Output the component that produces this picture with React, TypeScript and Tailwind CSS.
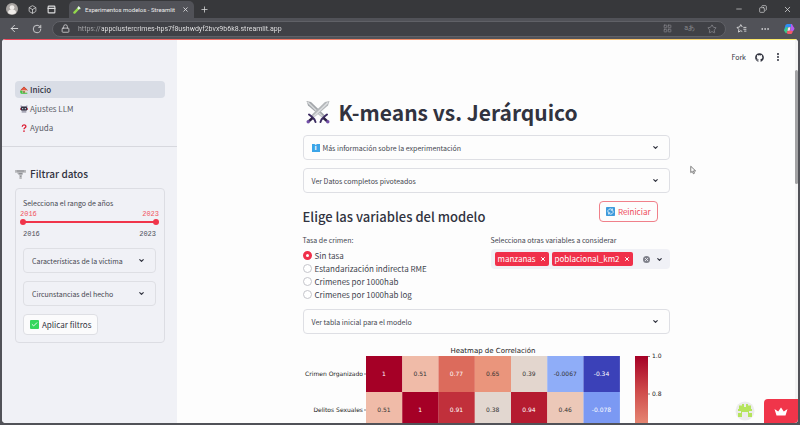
import { ReactNode, useState } from 'react';
import {
  ArrowLeft, RotateCw, Lock, Plus, X, Minus, Copy, Star, Ellipsis, ChevronDown, EllipsisVertical,
  PanelTop, Box, LayoutGrid, Check,
} from 'lucide-react';
import { FaGithub } from 'react-icons/fa';

const sans = "font-['Noto_Sans_CJK_SC','Open_Sans',sans-serif]";
const chrome = "font-['Roboto','Noto_Sans',sans-serif]";

function BrowserChrome() {
  return (
    <div className={`${chrome} shrink-0 text-[#dcdcde]`}>
      <div className="flex h-[18px] items-end bg-[#37383b]">
        <div className="flex h-[18px] w-[69px] items-center gap-[10px] pl-[6px]">
          <svg viewBox="0 0 12 12" className="size-3">
            <circle cx="6" cy="6" r="6" fill="#a9a5a2" />
            <circle cx="6" cy="4.6" r="2.4" fill="#efece9" />
            <path d="M2 9.8a4 3.2 0 0 1 8 0A6 6 0 0 1 2 9.8Z" fill="#efece9" />
          </svg>
          <Box className="size-[9px]" />
          <PanelTop className="size-[9px]" strokeWidth={3} />
        </div>
        <div className="flex h-[17px] w-[125px] items-center gap-1 rounded-t-[5px] bg-[#515258] pr-[5px] pl-1">
          <svg viewBox="0 0 10 10" className="size-2 shrink-0">
            <path d="M1.8 8.2 7.6 2.2" stroke="#93d84c" strokeWidth="3" strokeLinecap="round" />
            <path d="m6.2 3.6 2-2" stroke="#e8f6e8" strokeWidth="3" />
            <path d="m6.2.4 3.2 3" stroke="#d7e4ea" strokeWidth="1" />
          </svg>
          <span className="flex-1 text-[6px] leading-[12px] whitespace-nowrap text-[#ededee]">Experimentos modelos - Streamlit</span>
          <button aria-label="Cerrar pestaña"><X className="size-[7px]" strokeWidth={3} /></button>
        </div>
        <button aria-label="Nueva pestaña" className="flex h-[18px] items-center pl-[6px]"><Plus className="size-[9px]" /></button>
        <div className="ml-auto flex h-[18px] items-center gap-4 pr-2">
          <button aria-label="Minimizar"><Minus className="size-2" /></button>
          <button aria-label="Restaurar"><Copy className="size-2 -scale-x-100" /></button>
          <button aria-label="Cerrar"><X className="size-[9px]" /></button>
        </div>
      </div>
      <div className="flex h-[21px] items-center bg-[#515258] pr-[5px] pl-[9px]">
        <button aria-label="Atrás"><ArrowLeft className="size-[11px]" /></button>
        <button aria-label="Recargar" className="ml-3"><RotateCw className="size-[10px]" /></button>
        <div className="ml-[10px] flex h-4 flex-1 items-center rounded-full border border-[#606167] bg-[#404146] pr-2 pl-2">
          <Lock className="size-[9px]" />
          <input aria-label="Dirección" readOnly value="https://appclustercrimes-hps7f8ushwdyf2bvx9b6k8.streamlit.app"
            className="ml-2 block h-[14px] min-w-0 flex-1 bg-linear-to-r from-[#a9aaad] from-[24px] to-[#ececed] to-[24px] bg-clip-text text-[7px] leading-[14px] text-transparent outline-none" />
          <div className="flex items-center gap-3 text-[#85868b]">
            <LayoutGrid className="size-[9px]" />
            <span className="text-[7px] leading-none">aあ</span>
            <Star className="size-[10px]" />
          </div>
        </div>
        <div className="flex items-center gap-[13px] pl-[10px]">
          <button aria-label="Favoritos" className="flex items-center">
            <svg viewBox="0 0 14 12" className="h-[9px] w-[11px]" fill="none" stroke="currentColor" strokeWidth="1.2" strokeLinejoin="round">
              <path d="M8 4 6 .8 4.4 4 1 4.6l2.4 2.6L3 10.8 6 9l2 1M9.5 4.5h4M9.5 7h4M10.5 9.5h3" />
            </svg>
          </button>
          <button aria-label="Más"><Ellipsis className="size-[10px]" /></button>
          <svg viewBox="0 0 12 12" className="size-3">
            <path d="M4 1h4l1.5 3H5L3.5 9 1 7.500 2.500 2Z" fill="#2f8df5" />
            <path d="M8 1c2 0 1.600 2.500 3 3.500 1.500 1-1 4-2 4l-2-.5 1-4Z" fill="#b65cf0" />
            <path d="m1 7.500 2-3.500 2 .5-.5 4.500L3 10.500Z" fill="#38cc87" />
            <path d="M3.500 8.500 8 7.500l2 1L8.500 11h-4Z" fill="#f25a68" />
            <path d="m5 4.500 2.500-.5-.5 3.500-2.500.5Z" fill="#f6dfef" />
          </svg>
        </div>
      </div>
    </div>
  );
}

function HouseIcon() {
  return (
    <svg viewBox="0 0 12 12" className="size-2">
      <path d="M2.500 6h7v5h-7Z" fill="#e9d3bd" />
      <path d="m.8 6.400 5.200-5 5.200 5" fill="#e35b45" stroke="#c8452f" strokeWidth="1.400" />
      <path d="M5 7.500h2V11H5Z" fill="#875436" />
      <circle cx="2" cy="8.600" r="2" fill="#3ec440" />
      <path d="M1 10h10v1.800H1Z" fill="#3ec440" />
    </svg>
  );
}

function RobotIcon() {
  return (
    <svg viewBox="0 0 12 12" className="size-2">
      <path d="M1 .5 4 2h4l3-1.500v4H1Z" fill="#8e8ba3" />
      <rect x="1.500" y="2.500" width="9" height="6" rx="1.500" fill="#34313f" />
      <path d="M0 4.500h1.500v3H0Zm10.500 0H12v3h-1.500Z" fill="#c5526b" />
      <circle cx="4" cy="5.500" r="1" fill="#d5e4f8" />
      <circle cx="8" cy="5.500" r="1" fill="#d5e4f8" />
      <path d="M2.500 8.500h7v3h-7Z" fill="#a8a9b7" />
    </svg>
  );
}

function QuestionIcon() {
  return (
    <svg viewBox="0 0 12 12" className="size-2" fill="none">
      <path d="M3.400 4C3.400.6 8.800.6 8.800 3.600 8.800 5.600 6 5.600 6 8" stroke="#dc1f35" strokeWidth="2" />
      <circle cx="6" cy="10.600" r="1.300" fill="#dc1f35" />
    </svg>
  );
}

function FaucetIcon() {
  return (
    <svg viewBox="0 0 12 12" className="size-[11px]">
      <path d="M0 1h12v3H8.500v2L7.400 7v4H4.800V7.200L2.500 5V4H0Z" fill="#b9babd" />
      <path d="M2 2.200h8M4 5h4M5.500 8h1.400" stroke="#818388" strokeWidth=".9" />
    </svg>
  );
}

function SwordsIcon() {
  return (
    <svg viewBox="0 0 24 24" className="size-6">
      <path d="M.5 1 5 2 18.500 15 16 17.500 2 5.500Z" fill="#a3a6aa" />
      <path d="m1.500 2 15 14.500" stroke="#d6d8da" strokeWidth="1.600" />
      <path d="M23.500 1 19 2 5.500 15 8 17.500 22 5.500Z" fill="#b4b7ba" />
      <path d="M22 2.500 7.500 16.500" stroke="#dcdee0" strokeWidth="1.600" />
      <path d="M3 14.500 5 16l3.500 3.500 1 2.500M21 14.500 19 16l-3.500 3.500-1 2.500" stroke="#3d2d63" strokeWidth="2" fill="none" strokeLinecap="round" strokeLinejoin="round" />
      <path d="m6.500 18-4 3.500M17.500 18l4 3.500" stroke="#2c2143" strokeWidth="2.400" />
      <circle cx="2.200" cy="21.800" r="1.700" fill="#7350a8" />
      <circle cx="21.800" cy="21.800" r="1.700" fill="#7350a8" />
    </svg>
  );
}

function Expander({ children }: { children: ReactNode }) {
  const [open, setOpen] = useState(false);
  return (
    <button
      aria-expanded={open}
      onClick={() => setOpen(!open)}
      className="flex h-[25px] w-full items-center justify-between rounded-[4px] border border-[#dedfe4] px-2 text-[7px] leading-[12px] text-[#43454f]"
    >
      <span className="flex items-center gap-[3px]">{children}</span>
      <ChevronDown className="mr-[2px] size-[7px] text-[#31333f]" strokeWidth={4} />
    </button>
  );
}

const thumb =
  'pointer-events-none absolute inset-0 m-0 h-[6px] w-full appearance-none bg-transparent [&::-webkit-slider-thumb]:pointer-events-auto [&::-webkit-slider-thumb]:size-[6px] [&::-webkit-slider-thumb]:appearance-none [&::-webkit-slider-thumb]:rounded-full [&::-webkit-slider-thumb]:bg-[#f0354a]';

function Sidebar() {
  const [from, setFrom] = useState(2016);
  const [to, setTo] = useState(2023);
  return (
    <aside className="w-[175px] shrink-0 bg-[#f0f1f6] pt-[42px]">
      <nav className="flex flex-col gap-[2px] pr-3 pb-[10px] pl-[13px] text-[8px] leading-[17px] text-[#5b5d68]">
        <a href="#inicio" className="flex h-[17px] items-center gap-[2px] rounded-[4px] bg-[#d9dde6] pl-[5px] font-medium text-[#31333f]"><HouseIcon />Inicio</a>
        <a href="#ajustes" className="flex h-[17px] items-center gap-[2px] pl-[5px]"><RobotIcon />Ajustes LLM</a>
        <a href="#ayuda" className="flex h-[17px] items-center gap-[2px] pl-[5px]"><QuestionIcon />Ayuda</a>
      </nav>
      <div className="border-t border-[#d7d8de] pt-[19px] pr-3 pl-[13px]">
        <h2 className="flex items-center gap-1 text-[10px] leading-[16px] font-medium text-[#31333f]"><FaucetIcon />Filtrar datos</h2>
        <form className="mt-[6px] rounded-[4px] border border-[#dcdde3] pt-2 pr-2 pb-[7px] pl-[7px]" onSubmit={(e) => e.preventDefault()}>
          <label htmlFor="desde" className="block text-[7px] leading-[12px] text-[#43454f]">Selecciona el rango de años</label>
          <div className="-mx-[3px] flex justify-between font-['Liberation_Mono',monospace] text-[7px] leading-[10px] text-[#f0545f]">
            <output>{from}</output><output>{to}</output>
          </div>
          <div className="relative -mx-[3px] h-[6px]">
            <div className="mx-[3px] h-full border-y-2 border-[#f0f1f6] bg-[#f0354a]" />
            <input id="desde" type="range" min={2016} max={2023} value={from} onChange={(e) => setFrom(Math.min(+e.target.value, to))} className={thumb} />
            <input aria-label="Año final" type="range" min={2016} max={2023} value={to} onChange={(e) => setTo(Math.max(+e.target.value, from))} className={thumb} />
          </div>
          <div className="mt-1 flex justify-between font-['Liberation_Mono',monospace] text-[7px] leading-[10px] text-[#4c4e59]">
            <span>2016</span><span>2023</span>
          </div>
          <div className="mt-[9px] flex flex-col gap-2">
            <Expander>Características de la víctima</Expander>
            <Expander>Circunstancias del hecho</Expander>
          </div>
          <button className="mt-2 flex h-[21px] items-center gap-[3px] rounded-[4px] border border-[#dedfe4] bg-[#fbfbfc] px-[6px] text-[8px] leading-[12px] text-[#31333f]">
            <span className="flex size-[9px] items-center justify-center rounded-[1px] bg-[#35d75d] text-white"><Check className="size-[7px]" strokeWidth={3} /></span>
            Aplicar filtros
          </button>
        </form>
      </div>
    </aside>
  );
}

const cells = [
  [['1', '#a50026', '#fff'], ['0.51', '#f0bba8', '#333'], ['0.77', '#dc6b5c', '#fff'], ['0.65', '#ea957c', '#333'], ['0.39', '#e3d6ce', '#333'], ['-0.0067', '#8fadf8', '#333'], ['-0.34', '#3b41b8', '#fff']],
  [['0.51', '#f0bba8', '#333'], ['1', '#a50026', '#fff'], ['0.91', '#c1303b', '#fff'], ['0.38', '#e2d7d0', '#333'], ['0.94', '#b51b30', '#fff'], ['0.46', '#ecc8b8', '#333'], ['-0.078', '#7b99f3', '#fff']],
];

function Heatmap() {
  return (
    <svg viewBox="0 0 367 90" className="mt-[10px] block w-full font-['DejaVu_Sans',sans-serif]" role="img" aria-label="Heatmap de Correlación">
      <defs>
        <linearGradient id="bar" x1="0" y1="0" x2="0" y2="1">
          <stop offset="0" stopColor="#a50026" />
          <stop offset=".45" stopColor="#cf4b4b" />
          <stop offset="1" stopColor="#ed9a80" />
        </linearGradient>
      </defs>
      <text x="190" y="9" textAnchor="middle" fontSize="7" fill="#222">Heatmap de Correlación</text>
      {cells.map((row, r) => (
        <g key={r}>
          <text x="60" y={32 + r * 36} textAnchor="end" fontSize="6" fill="#222">{['Crimen Organizado', 'Delitos Sexuales'][r]}</text>
          <path d={`M61 ${30 + r * 36}h2`} stroke="#333" strokeWidth=".6" />
          {row.map(([value, fill, ink], c) => (
            <g key={c}>
              <rect x={63 + c * 36.25} y={12 + r * 36} width="36.4" height="36" fill={fill} />
              <text x={81 + c * 36.25} y={32 + r * 36} textAnchor="middle" fontSize="6" fill={ink}>{value}</text>
            </g>
          ))}
        </g>
      ))}
      <rect x="332" y="12" width="13" height="78" fill="url(#bar)" />
      <path d="M345 12.500h2M345 50h2" stroke="#333" strokeWidth=".6" />
      <text x="349" y="14" fontSize="6" fill="#222">1.0</text>
      <text x="349" y="52" fontSize="6" fill="#222">0.8</text>
    </svg>
  );
}

function Tag({ children, onRemove }: { children: string; onRemove: () => void }) {
  return (
    <span className="flex h-[14px] shrink-0 items-center gap-1 rounded-[2px] bg-[#f0304a] px-[3px] text-[8px] leading-[14px] text-white">
      {children}
      <button aria-label={`Quitar ${children}`} onClick={onRemove}><X className="size-[6px]" strokeWidth={4} /></button>
    </span>
  );
}

const rates = ['Sin tasa', 'Estandarización indirecta RME', 'Crimenes por 1000hab', 'Crimenes por 1000hab log'];

function Main() {
  const [rate, setRate] = useState(rates[0]);
  const [tags, setTags] = useState(['manzanas', 'poblacional_km2']);
  return (
    <main className="min-w-0 flex-1 overflow-hidden bg-[#fdfdfd]">
      <header className="flex h-[36px] items-center justify-end gap-[9px] pr-3 text-[7px] leading-[10px] text-[#31333f]">
        <button>Fork</button>
        <a href="#github" aria-label="GitHub"><FaGithub className="size-[9px]" /></a>
        <button aria-label="Menú"><EllipsisVertical className="size-[10px]" strokeWidth={3} /></button>
      </header>
      <div className="mx-auto max-w-[367px] pt-[23px]">
        <h1 className="flex items-center gap-[9px] pl-[3px] text-[21px] leading-[28px] font-bold whitespace-nowrap text-[#31333f]"><SwordsIcon />K-means vs. Jerárquico</h1>
        <div className="mt-[9px] flex flex-col gap-2">
          <Expander>
            <span className="flex size-2 items-center justify-center bg-[#3ca5e8] text-[7px] leading-none font-bold text-white">i</span>
            Más información sobre la experimentación
          </Expander>
          <Expander>Ver Datos completos pivoteados</Expander>
        </div>
        <div className="mt-2 flex justify-between pr-3">
          <h2 className="pt-[6px] text-[13px] leading-[20px] font-medium text-[#31333f]">Elige las variables del modelo</h2>
          <button className="flex h-[21px] items-center gap-[3px] rounded-[4px] border border-[#f0808a] px-[6px] text-[8px] leading-[12px] text-[#ee4b5b]">
            <svg viewBox="0 0 12 12" className="size-[9px]">
              <rect width="12" height="12" rx="1" fill="#3e9bdc" />
              <path d="M3 7.500A3.200 3.200 0 0 1 8.500 4M9 4.500A3.200 3.200 0 0 1 3.500 8M8.500 2v2.300H6.300M3.500 10V7.700h2.200" fill="none" stroke="#fff" />
            </svg>
            Reiniciar
          </button>
        </div>
        <div className="mt-[7px] grid grid-cols-[1fr_179px] gap-2">
          <fieldset>
            <legend className="text-[7px] leading-[12px] text-[#43454f]">Tasa de crimen:</legend>
            <div className="mt-[3px] flex flex-col">
              {rates.map((r) => (
                <label key={r} className="flex items-center gap-[3px] text-[8px] leading-[13px] text-[#43454f]">
                  <input type="radio" name="tasa" checked={rate === r} onChange={() => setRate(r)}
                    className="size-[9px] appearance-none rounded-full border border-[#c4c5cb] bg-white checked:border-3 checked:border-[#f0304a]" />
                  {r}
                </label>
              ))}
            </div>
          </fieldset>
          <div>
            <label htmlFor="variables" className="block text-[7px] leading-[12px] text-[#43454f]">Selecciona otras variables a considerar</label>
            <div className="mt-[3px] flex h-5 items-center rounded-[4px] bg-[#f0f1f6] px-1 text-[#31333f]">
              <div className="flex gap-[3px]">
                {tags.map((t) => <Tag key={t} onRemove={() => setTags(tags.filter((o) => o !== t))}>{t}</Tag>)}
              </div>
              <input id="variables" role="combobox" aria-expanded="false" className="w-0 min-w-0 flex-1 bg-transparent text-[8px] outline-none" />
              <button aria-label="Limpiar" className="flex size-[7px] shrink-0 items-center justify-center rounded-full bg-[#7e808a] text-[#f0f1f6]" onClick={() => setTags([])}><X className="size-[5px]" strokeWidth={4} /></button>
              <ChevronDown className="mr-[3px] ml-[6px] size-[7px] shrink-0" strokeWidth={4} />
            </div>
          </div>
        </div>
        <div className="mt-2"><Expander>Ver tabla inicial para el modelo</Expander></div>
        <Heatmap />
      </div>
    </main>
  );
}

export default function App() {
  return (
    <div className={`${sans} relative flex h-screen flex-col overflow-hidden bg-[#515258]`}>
      <BrowserChrome />
      <div className="relative mx-[2px] mb-[2px] flex min-h-0 flex-1 overflow-hidden rounded-[4px] bg-[#fdfdfd]">
        <Sidebar />
        <Main />
        <div className="w-[3px] shrink-0 bg-[#f4f4f4] pt-[31px]"><div className="h-[114px] rounded-full bg-[#a3a3a5]" /></div>
        <div className="absolute inset-x-0 top-0 h-px bg-linear-to-r from-[#f0445a] via-[#f58a68] to-[#fbf06a]" />
        <div className="absolute right-0 bottom-0 flex items-end gap-[9px]">
          <svg viewBox="0 0 20 20" className="mb-[2px] size-5">
            <circle cx="10" cy="10" r="9.500" fill="#ececec" />
            <path d="M4 4.500h3V3h2v3h2V3h2v1.500h3V8h1v2h-3v2h3v4h-4v-5H7v5H3v-4h3v-2H3V8h1Z" fill="#b5e45c" />
            <path d="M9 8h2v3H9Z" fill="#b5e45c" />
          </svg>
          <a href="#streamlit" aria-label="Streamlit" className="flex h-6 w-[34px] items-center justify-center rounded-tl-[4px] bg-[#f0354a]">
            <svg viewBox="0 0 14 9" className="h-[9px] w-[14px]"><path d="m.5 2 3.700 2.500L7 .5l2.800 4L13.500 2l-2 6.500h-9Z" fill="#fff" /></svg>
          </a>
        </div>
      </div>
      <svg viewBox="0 0 8 12" className="absolute top-[165px] left-[690px] h-[10px] w-[6px]">
        <path d="M1 1v8.500l2-1.700L4.500 11 6 10.300 4.600 7.200H7.500Z" fill="#fff" stroke="#555" />
      </svg>
    </div>
  );
}
